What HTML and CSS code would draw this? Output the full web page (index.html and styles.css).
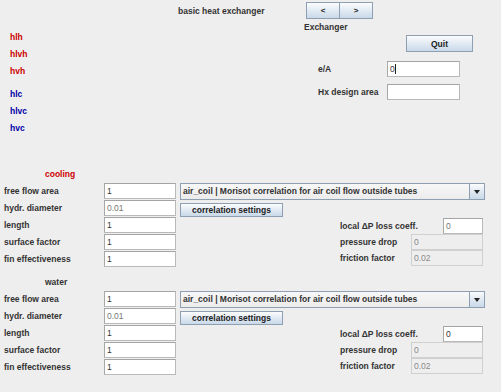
FILE: index.html
```html
<!DOCTYPE html>
<html lang="en">
<head>
    <meta charset="UTF-8">
    <title>basic heat exchanger</title>
    <link rel="stylesheet" href="styles.css">
</head>
<body>
    <div class="titlebar">
        <span class="title">basic heat exchanger</span>
        <div class="nav">
            <button class="btn nav-btn">&lt;</button>
            <button class="btn nav-btn">&gt;</button>
        </div>
    </div>

    <div class="head">
        <div class="hlist">
            <div class="hgroup hot">
                <div>hlh</div>
                <div>hlvh</div>
                <div>hvh</div>
            </div>
            <div class="hgroup cold">
                <div>hlc</div>
                <div>hlvc</div>
                <div>hvc</div>
            </div>
        </div>
        <div class="side">
            <div class="side-title">Exchanger</div>
            <button class="btn quit">Quit</button>
            <div class="side-row first">
                <span class="side-label">e/A</span>
                <div class="field wide">0<span class="caret"></span></div>
            </div>
            <div class="side-row">
                <span class="side-label">Hx design area</span>
                <div class="field wide"></div>
            </div>
        </div>
    </div>

    <!-- cooling stream -->
    <section class="stream cooling">
        <div class="stream-name">cooling</div>
        <div class="stream-body">
            <div class="params">
                <span>free flow area</span><div class="field">1</div>
                <span>hydr. diameter</span><div class="field dim">0.01</div>
                <span>length</span><div class="field">1</div>
                <span>surface factor</span><div class="field">1</div>
                <span>fin effectiveness</span><div class="field">1</div>
            </div>
            <div class="corr">
                <div class="combo">
                    <span class="combo-text">air_coil | Morisot correlation for air coil flow outside tubes</span>
                    <span class="combo-arrow"></span>
                </div>
                <button class="btn corr-btn">correlation settings</button>
                <div class="loss">
                    <div class="loss-row"><span>local &Delta;P loss coeff.</span><div class="field small dim">0</div></div>
                    <div class="loss-row"><span>pressure drop</span><div class="field readonly">0</div></div>
                    <div class="loss-row"><span>friction factor</span><div class="field readonly">0.02</div></div>
                </div>
            </div>
        </div>
    </section>

    <!-- water stream -->
    <section class="stream water">
        <div class="stream-name">water</div>
        <div class="stream-body">
            <div class="params">
                <span>free flow area</span><div class="field">1</div>
                <span>hydr. diameter</span><div class="field dim">0.01</div>
                <span>length</span><div class="field">1</div>
                <span>surface factor</span><div class="field">1</div>
                <span>fin effectiveness</span><div class="field">1</div>
            </div>
            <div class="corr">
                <div class="combo">
                    <span class="combo-text">air_coil | Morisot correlation for air coil flow outside tubes</span>
                    <span class="combo-arrow"></span>
                </div>
                <button class="btn corr-btn">correlation settings</button>
                <div class="loss">
                    <div class="loss-row"><span>local &Delta;P loss coeff.</span><div class="field small">0</div></div>
                    <div class="loss-row"><span>pressure drop</span><div class="field readonly">0</div></div>
                    <div class="loss-row"><span>friction factor</span><div class="field readonly">0.02</div></div>
                </div>
            </div>
        </div>
    </section>
</body>
</html>
```

FILE: styles.css
```css
:root {
    --panel: #eeeeee;
    --text: #333333;
    --hot: #cc0000;
    --cold: #0000a8;
    --field-border: #b9b9b9;
}

* {
    box-sizing: border-box;
    margin: 0;
    padding: 0;
}

body {
    width: 501px;
    height: 392px;
    overflow: hidden;
    background: var(--panel);
    color: var(--text);
    font-family: "Liberation Sans", Arial, sans-serif;
    font-size: 8.5px;
    font-weight: bold;
}

/* buttons */
.btn {
    font: inherit;
    color: #222;
    border: 1px solid #8d9fb1;
    background: linear-gradient(#fbfcfd, #e4ecf4 45%, #c9d9e9);
    display: flex;
    align-items: center;
    justify-content: center;
}

/* text fields */
.field {
    height: 16px;
    width: 72px;
    background: #fff;
    border: 1px solid var(--field-border);
    border-top-color: #a4a4a4;
    border-left-color: #a8a8a8;
    padding-left: 2px;
    font-weight: normal;
    color: #333;
    line-height: 14px;
}

.field.dim {
    color: #777;
}

.field.wide {
    width: 73px;
}

.field.small {
    width: 40px;
}

.field.readonly {
    background: var(--panel);
    border-color: #d0d0d0;
    color: #8a8a8a;
}

.caret {
    display: inline-block;
    width: 1px;
    height: 10px;
    background: #222;
    vertical-align: -2px;
}

/* header */
.titlebar {
    display: flex;
    align-items: flex-start;
    height: 19px;
    padding-left: 178px;
}

.title {
    width: 128px;
    line-height: 22px;
}

.nav {
    display: flex;
    margin-top: 2px;
}

.nav-btn {
    width: 34px;
    height: 17px;
    font-size: 8px;
}

.nav-btn + .nav-btn {
    margin-left: -1px;
}

.head {
    display: flex;
}

.hlist {
    width: 304px;
    padding: 10px 0 0 10px;
}

.hgroup div {
    height: 17px;
    line-height: 17px;
}

.hgroup.hot {
    color: var(--hot);
}

.hgroup.cold {
    color: var(--cold);
    margin-top: 6px;
}

.side-title {
    height: 16px;
    line-height: 16px;
}

.quit {
    width: 67px;
    height: 17px;
    margin-left: 102px;
}

.side-row {
    display: flex;
    align-items: center;
    padding-left: 14px;
    margin-top: 7px;
}

.side-row.first {
    margin-top: 9px;
}

.side-label {
    width: 69px;
}

/* streams */
.stream.cooling {
    margin-top: 30px;
}

.stream.water {
    margin-top: 8px;
}

.stream-name {
    height: 14px;
    line-height: 14px;
    padding-left: 45px;
    margin-bottom: 2px;
}

.cooling .stream-name {
    color: var(--hot);
}

.stream-body {
    display: flex;
    align-items: flex-start;
}

.params {
    display: grid;
    grid-template-columns: 100px 72px;
    grid-auto-rows: 16px;
    row-gap: 1px;
    align-items: center;
    padding-left: 4px;
}

.corr {
    margin-left: 4px;
}

.combo {
    display: flex;
    width: 305px;
    height: 17px;
    border: 1px solid #8d9fb1;
    background: linear-gradient(#f7f7f7, #ececec);
}

.combo-text {
    flex: 1;
    padding-left: 2px;
    line-height: 15px;
    white-space: nowrap;
    overflow: hidden;
}

.combo-arrow {
    width: 15px;
    border-left: 1px solid #8d9fb1;
    background: linear-gradient(#fbfcfd, #dfe8f1 50%, #c9d9e9);
    position: relative;
}

.combo-arrow::after {
    content: "";
    position: absolute;
    left: 4px;
    top: 6px;
    border-left: 3px solid transparent;
    border-right: 3px solid transparent;
    border-top: 4px solid #222;
}

.corr-btn {
    width: 103px;
    height: 14px;
    margin-top: 3px;
}

.loss {
    width: 143px;
    margin: 1px 0 0 160px;
}

.loss-row {
    display: flex;
    align-items: center;
    justify-content: space-between;
    height: 16px;
}
```
